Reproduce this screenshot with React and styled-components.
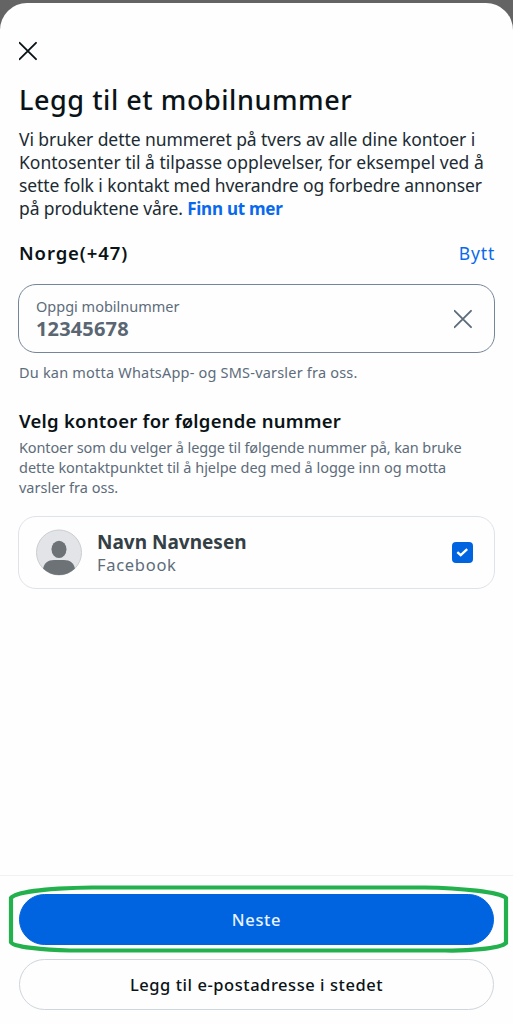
import React from 'react';
import styled, { createGlobalStyle } from 'styled-components';

const GlobalStyle = createGlobalStyle`
    * {
        box-sizing: border-box;
    }

    body {
        margin: 0;
        background: #646464;
        font-family: 'Noto Sans', 'Open Sans', sans-serif;
        color: #0a1317;
    }

    h1, h2, p {
        margin: 0;
    }

    button {
        font-family: inherit;
        cursor: pointer;
    }
`;

const Sheet = styled.main`
    display: flex;
    flex-direction: column;
    height: 1021.5px;
    margin-top: 2.5px;
    background: #fefefe;
    border-radius: 27px 27px 0 0;
    overflow: hidden;
`;

const Content = styled.div`
    flex: 1;
    padding: 38.5px 18px 0 19px;
`;

const IconButton = styled.button`
    display: flex;
    padding: 0;
    border: 0;
    background: none;
    color: ${props => props.$color || '#0a1317'};
`;

// One line of copy; the spacing differs per line, so it is passed in.
const Line = styled.span`
    display: block;
    white-space: nowrap;
    letter-spacing: ${props => props.$spacing || 0}px;
`;

const Title = styled.h1`
    margin-top: 19px;
    font-size: 27px;
    line-height: 40px;
    font-weight: 500;
`;

const Intro = styled.p`
    margin-top: 8px;
    font-size: 17.5px;
    line-height: 23px;
    color: #1c2b33;
`;

const Link = styled.a`
    color: #0869ee;
    font-size: 17px;
    line-height: 1;
    font-weight: 700;
    letter-spacing: -0.25px;
`;

const CountryRow = styled.div`
    display: flex;
    justify-content: space-between;
    align-items: center;
    height: 28px;
    margin-top: 18.5px;
`;

const Country = styled.h2`
    font-size: 18.5px;
    font-weight: 600;
    letter-spacing: 0.9px;
`;

const ChangeButton = styled.button`
    padding: 0;
    border: 0;
    background: none;
    color: #0869ee;
    font-size: 17.5px;
    letter-spacing: 0.8px;
`;

const Field = styled.div`
    display: flex;
    justify-content: space-between;
    align-items: center;
    height: 69px;
    margin: 17.5px 0 0 -1px;
    padding: 0 21px 0 17px;
    border: 1px solid #75869a;
    border-radius: 18px;
`;

const FieldLabel = styled.div`
    font-size: 14.5px;
    line-height: 20px;
    color: #5d6c7b;
`;

const FieldValue = styled.div`
    font-size: 20px;
    line-height: 26px;
    font-weight: 700;
    color: #5a6672;
    letter-spacing: 0.15px;
`;

const Hint = styled.p`
    margin-top: 9px;
    font-size: 14.5px;
    line-height: 20px;
    color: #5d6c7b;
`;

const SectionTitle = styled.h2`
    margin-top: 25px;
    font-size: 18.5px;
    line-height: 28px;
    font-weight: 600;
`;

const SectionText = styled.p`
    margin-top: 2px;
    font-size: 14.5px;
    line-height: 20px;
    color: #5d6c7b;
`;

const AccountCard = styled.div`
    display: flex;
    align-items: center;
    height: 73px;
    margin: 19px 0 0 -1px;
    padding: 0 21px 0 17px;
    border: 1px solid #dee3e9;
    border-radius: 18px;
`;

const AccountText = styled.div`
    flex: 1;
    margin-left: 15px;
`;

const AccountName = styled.div`
    font-size: 19px;
    line-height: 24px;
    font-weight: 700;
    color: #344045;
`;

const AccountSource = styled.div`
    font-size: 16.5px;
    line-height: 22px;
    color: #5d6c7b;
    letter-spacing: 0.7px;
`;

const Checkbox = styled.span`
    display: flex;
    align-items: center;
    justify-content: center;
    width: 21px;
    height: 21px;
    border-radius: 4px;
    background: #0064e0;
`;

const Footer = styled.footer`
    position: relative;
    display: flex;
    flex-direction: column;
    gap: 14px;
    height: 149px;
    padding: 18px 19px 0;
    border-top: 1px solid #f0f1f2;
`;

const FooterButton = styled.button`
    height: 51px;
    flex-shrink: 0;
    padding: 0;
    border: 1px solid ${props => (props.$primary ? '#0064e0' : '#ced5dc')};
    border-radius: 26px;
    background: ${props => (props.$primary ? '#0064e0' : 'transparent')};
    color: ${props => (props.$primary ? '#e8f3ff' : '#0a1317')};
    font-size: 16.5px;
    font-weight: 500;
    letter-spacing: ${props => props.$spacing || 0}px;
`;

const Highlight = styled.svg`
    position: absolute;
    top: 0;
    left: 0;
    pointer-events: none;
`;

const CloseIcon = () => (
    <svg width="19" height="20" viewBox="0 0 19 20" fill="none" stroke="currentColor" strokeWidth="1.9" strokeLinecap="round">
        <path d="M0.6 1.8 17 18.2M17 1.8.6 18.2" />
    </svg>
);

const Avatar = () => (
    <svg width="46" height="47" viewBox="0 0 46 47">
        <defs>
            <clipPath id="avatar">
                <circle cx="23" cy="23.5" r="22.6" />
            </clipPath>
        </defs>
        <circle cx="23" cy="23.5" r="22.5" fill="#e2e4e8" stroke="#cbcdd1" />
        <ellipse cx="23" cy="20.3" rx="7.5" ry="8.6" fill="#6c7275" />
        <path clipPath="url(#avatar)" d="M7 40C8 34 12 31 18 31h10c6 0 10 3 11 9v7H7Z" fill="#6c7275" />
    </svg>
);

const App = () => (
    <>
        <GlobalStyle />
        <Sheet>
            <Content>
                <IconButton aria-label="Lukk">
                    <CloseIcon />
                </IconButton>
                <Title>
                    <Line $spacing={0.55}>Legg til et mobilnummer</Line>
                </Title>
                <Intro>
                    <Line $spacing={-0.07}>Vi bruker dette nummeret på tvers av alle dine kontoer i</Line>
                    <Line>Kontosenter til å tilpasse opplevelser, for eksempel ved å</Line>
                    <Line $spacing={-0.09}>sette folk i kontakt med hverandre og forbedre annonser</Line>
                    <Line $spacing={-0.11}>på produktene våre. <Link>Finn ut mer</Link></Line>
                </Intro>
                <CountryRow>
                    <Country>Norge(+47)</Country>
                    <ChangeButton>Bytt</ChangeButton>
                </CountryRow>
                <Field>
                    <div>
                        <FieldLabel>Oppgi mobilnummer</FieldLabel>
                        <FieldValue>12345678</FieldValue>
                    </div>
                    <IconButton $color="#5d6c7b" aria-label="Tøm">
                        <CloseIcon />
                    </IconButton>
                </Field>
                <Hint>
                    <Line $spacing={0.2}>Du kan motta WhatsApp- og SMS-varsler fra oss.</Line>
                </Hint>
                <SectionTitle>
                    <Line $spacing={0.24}>Velg kontoer for følgende nummer</Line>
                </SectionTitle>
                <SectionText>
                    <Line $spacing={-0.12}>Kontoer som du velger å legge til følgende nummer på, kan bruke</Line>
                    <Line $spacing={-0.02}>dette kontaktpunktet til å hjelpe deg med å logge inn og motta</Line>
                    <Line>varsler fra oss.</Line>
                </SectionText>
                <AccountCard>
                    <Avatar />
                    <AccountText>
                        <AccountName>Navn Navnesen</AccountName>
                        <AccountSource>Facebook</AccountSource>
                    </AccountText>
                    <Checkbox role="checkbox" aria-checked="true">
                        <svg width="13" height="11" viewBox="0 0 13 11" fill="none" stroke="#fff" strokeWidth="2.3">
                            <path d="M1.3 5.1 4.7 8.2 11.2 2.1" />
                        </svg>
                    </Checkbox>
                </AccountCard>
            </Content>
            <Footer>
                <FooterButton $primary $spacing={0.7}>Neste</FooterButton>
                <FooterButton $spacing={0.55}>Legg til e-postadresse i stedet</FooterButton>
                {/* hand-drawn ring round the primary button */}
                <Highlight width="513" height="80" viewBox="0 0 513 80" fill="none" stroke="#22b14c" strokeWidth="4.2">
                    <path d="M92 11.5H424C460 12 500 16 506 22V67C500 73 465 75 445 74.5H70C45 74 12 71 11 66V22C16 15 55 12 92 11.5Z" />
                </Highlight>
            </Footer>
        </Sheet>
    </>
);

export default App;
